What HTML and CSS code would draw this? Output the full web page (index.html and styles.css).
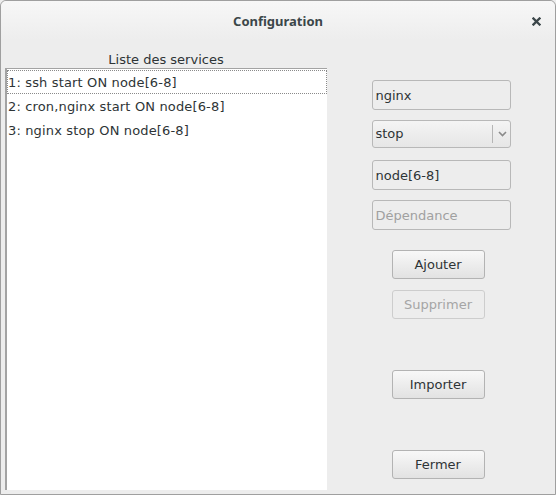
FILE: index.html
```html
<!DOCTYPE html>
<html lang="fr">
<head>
<meta charset="utf-8">
<title>Configuration</title>
<link rel="stylesheet" href="styles.css">
</head>
<body>
<div class="window">
  <div class="titlebar">
    <span class="title">Configuration</span>
    <span class="close"><svg width="9" height="9" viewBox="0 0 9 9"><path d="M1.5 1.5 L7.5 7.5 M7.5 1.5 L1.5 7.5" stroke="#3b4649" stroke-width="2.3" stroke-linecap="square"/></svg></span>
  </div>
  <div class="content">
    <div class="left">
      <div class="list-label">Liste des services</div>
      <div class="list">
        <div class="row focused">1: ssh start ON node[6-8]</div>
        <div class="row">2: cron,nginx start ON node[6-8]</div>
        <div class="row">3: nginx stop ON node[6-8]</div>
      </div>
    </div>
    <div class="right">
      <div class="entry e1">nginx</div>
      <div class="combo"><span class="combo-text">stop</span><span class="combo-sep"></span><svg class="chev" width="9" height="6" viewBox="0 0 9 6"><path d="M1 1 L4.5 4.5 L8 1" fill="none" stroke="#8a8a8a" stroke-width="1.6"/></svg></div>
      <div class="entry e3">node[6-8]</div>
      <div class="entry e4 placeholder">Dépendance</div>
      <div class="btn b1">Ajouter</div>
      <div class="btn b2 disabled">Supprimer</div>
      <div class="btn b3">Importer</div>
      <div class="btn b4">Fermer</div>
    </div>
  </div>
</div>
</body>
</html>
```
FILE: styles.css
```css
html, body {
  margin: 0;
  padding: 0;
  background: #ededed;
}
.window {
  width: 556px;
  height: 495px;
  box-sizing: border-box;
  border: 1px solid #9f9f9f;
  border-radius: 6px 6px 0 0;
  background: #ededed;
  font-family: "DejaVu Sans", "Noto Sans", sans-serif;
  font-size: 13px;
  color: #2e3436;
  display: flex;
  flex-direction: column;
  overflow: hidden;
}
.titlebar {
  height: 39px;
  flex: none;
  background: linear-gradient(#f7f7f7, #ededed);
  border-radius: 5px 5px 0 0;
  display: flex;
  align-items: center;
  justify-content: center;
  position: relative;
}
.title {
  font-family: "Noto Sans", "DejaVu Sans", sans-serif;
  font-weight: bold;
  color: #3b4649;
  font-size: 13px;
  margin-top: 1px;
}
.close {
  position: absolute;
  right: 14px;
  top: 16px;
  width: 9px;
  height: 9px;
  display: flex;
}
.content {
  flex: 1;
  display: flex;
}
.left {
  width: 322px;
  margin-left: 4px;
  display: flex;
  flex-direction: column;
}
.list-label {
  height: 28px;
  line-height: 16px;
  padding-top: 12px;
  box-sizing: border-box;
  text-align: center;
  color: #2e3436;
}
.list {
  flex: 1;
  background: #fff;
  border-left: 2px solid #a3a3a3;
  border-top: 1px solid #a3a3a3;
  margin-bottom: 4px;
  padding-top: 1px;
}
.row {
  height: 24px;
  line-height: 23px;
  padding-left: 0;
  box-sizing: border-box;
  border: 1px solid transparent;
  white-space: nowrap;
  color: #2e3436;
  letter-spacing: 0.15px;
}
.row.focused {
  border: 1px dotted #8a8a8a;
}
.right {
  flex: 1;
  display: flex;
  flex-direction: column;
  align-items: center;
}
.entry, .combo {
  width: 139px;
  height: 30px;
  box-sizing: border-box;
  border: 1px solid #b8b8b8;
  border-radius: 3px;
  background: #ededed;
  padding-left: 3px;
  line-height: 29px;
  color: #2e3436;
}
.e1 { margin-top: 40px; }
.combo {
  margin-top: 10px;
  height: 28px;
  line-height: 26px;
  display: flex;
  align-items: center;
  background: linear-gradient(#f4f4f4, #e6e6e6);
}
.combo-text { flex: 1; }
.combo-sep {
  width: 1px;
  height: 18px;
  background: #b5b5b5;
  margin-right: 5px;
}
.chev { margin-right: 3px; }
.e3 { margin-top: 12px; }
.e4 { margin-top: 10px; }
.placeholder { color: #a0a0a0; }
.btn {
  width: 93px;
  height: 29px;
  box-sizing: border-box;
  border: 1px solid #b3b3b3;
  border-radius: 3px;
  background: linear-gradient(#f8f8f8, #e2e2e2);
  text-align: center;
  line-height: 27px;
  color: #2e3436;
  margin-left: -6px;
}
.b1 { margin-top: 20px; }
.b2 { margin-top: 11px; }
.b3 { margin-top: 51px; }
.b4 { margin-top: 51px; }
.btn.disabled {
  background: #ededed;
  border-color: #cdcdcd;
  color: #a5a5a5;
}
```
